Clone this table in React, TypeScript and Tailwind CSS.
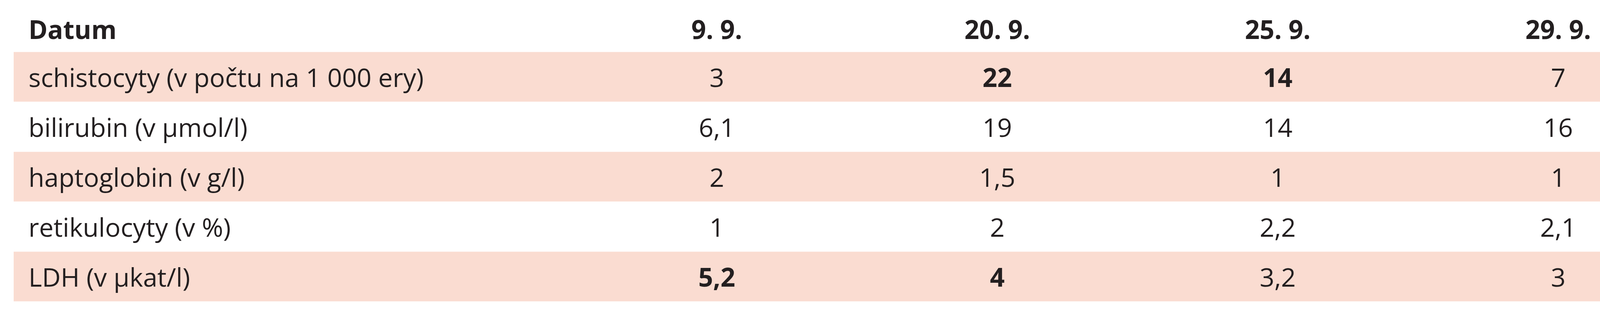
const dates = ["9. 9.", "20. 9.", "25. 9.", "29. 9."];

type Cell = { v: string; b?: boolean };

const rows: { label: string; cells: Cell[] }[] = [
  {
    label: "schistocyty (v počtu na 1 000 ery)",
    cells: [{ v: "3" }, { v: "22", b: true }, { v: "14", b: true }, { v: "7" }],
  },
  { label: "bilirubin (v µmol/l)", cells: [{ v: "6,1" }, { v: "19" }, { v: "14" }, { v: "16" }] },
  { label: "haptoglobin (v g/l)", cells: [{ v: "2" }, { v: "1,5" }, { v: "1" }, { v: "1" }] },
  { label: "retikulocyty (v %)", cells: [{ v: "1" }, { v: "2" }, { v: "2,2" }, { v: "2,1" }] },
  {
    label: "LDH (v µkat/l)",
    cells: [{ v: "5,2", b: true }, { v: "4", b: true }, { v: "3,2" }, { v: "3" }],
  },
];

export default function App() {
  return (
    <div className="w-full h-[800px] overflow-hidden bg-white font-['Open_Sans',sans-serif] text-[66px] leading-none text-[#231f20]">
      <div className="ml-[35px] w-[4313px] flex flex-col">
        <div className="grid grid-cols-[1441px_repeat(4,718px)] h-[133px] items-center pt-[14px] font-bold">
          <div className="pl-[38px]">Datum</div>
          {dates.map((d) => (
            <div key={d} className="text-center">
              {d}
            </div>
          ))}
        </div>
        {rows.map((row, i) => (
          <div
            key={row.label}
            className={
              i % 2 === 0
                ? "grid grid-cols-[1441px_repeat(4,718px)] h-[128px] items-center bg-[#fadcd1] border-y border-[#fce8e1]"
                : "grid grid-cols-[1441px_repeat(4,718px)] h-[128px] items-center"
            }
          >
            <div className="pl-[38px]">{row.label}</div>
            {row.cells.map((c, j) => (
              <div key={j} className={c.b ? "text-center font-bold" : "text-center"}>
                {c.v}
              </div>
            ))}
          </div>
        ))}
      </div>
    </div>
  );
}
